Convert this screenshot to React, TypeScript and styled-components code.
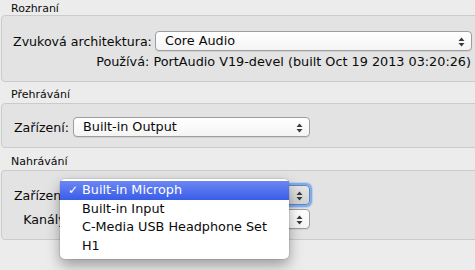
import React from "react";
import styled, { createGlobalStyle } from "styled-components";

const GlobalStyle = createGlobalStyle`
  html, body {
    margin: 0;
    padding: 0;
    background: #ececec;
    overflow: hidden;
  }
  body {
    font-family: "DejaVu Sans", "Liberation Sans", sans-serif;
    color: #0a0a0a;
  }
`;

const Page = styled.div`
  width: 479px;
  height: 270px;
  display: flex;
  flex-direction: column;
`;

const SectionTitle = styled.div<{ $top: number }>`
  font-size: 11px;
  line-height: 13px;
  padding: ${(p) => p.$top}px 0 0 11px;
  height: 13px;
`;

const Group = styled.div<{ $height: number; $top: number; $pad: number }>`
  margin: ${(p) => p.$top}px 0 0 1px;
  height: ${(p) => p.$height}px;
  box-sizing: border-box;
  background: #e3e3e3;
  border: 1px solid #cbcbcb;
  border-radius: 4px;
  padding: ${(p) => p.$pad}px 6px 0 11px;
  display: flex;
  flex-direction: column;
`;

const Row = styled.div<{ $labelWidth: number }>`
  display: grid;
  grid-template-columns: ${(p) => p.$labelWidth}px 1fr;
  column-gap: 4px;
  align-items: center;
  height: 20px;
  & + & {
    margin-top: 4px;
  }
`;

const Label = styled.div`
  font-size: 12.6px;
  text-align: right;
  white-space: nowrap;
`;

const SelectBox = styled.div<{ $width?: number; $focused?: boolean }>`
  position: relative;
  box-sizing: border-box;
  height: 20px;
  width: ${(p) => (p.$width ? `${p.$width}px` : "auto")};
  border: 1px solid ${(p) => (p.$focused ? "#5a86c8" : "#9e9e9e")};
  border-radius: 4px;
  background: ${(p) =>
    p.$focused
      ? "linear-gradient(#e4e4e4, #d2d2d2)"
      : "linear-gradient(#ffffff, #f4f4f4)"};
  box-shadow: ${(p) =>
    p.$focused
      ? "0 0 0 2px rgba(110, 160, 230, 0.75), 0 0 1px 3px rgba(140, 180, 235, 0.45)"
      : "0 1px 0 rgba(0, 0, 0, 0.08)"};
  font-size: 12.8px;
  line-height: 18px;
  padding-left: 9px;
  white-space: nowrap;
`;

const Arrows = styled.svg`
  position: absolute;
  right: 6px;
  top: 5px;
`;

const Info = styled.div`
  font-size: 12.8px;
  text-align: right;
  margin-top: 3px;
  padding-right: 1px;
  white-space: nowrap;
`;

const Menu = styled.div`
  position: absolute;
  left: -14px;
  top: -7px;
  width: 229px;
  background: #ffffff;
  border-radius: 5px;
  padding: 2px 0 4px;
  box-shadow: 0 6px 14px rgba(0, 0, 0, 0.35), 0 0 0 1px rgba(0, 0, 0, 0.08);
  z-index: 5;
`;

const MenuItem = styled.div<{ $active?: boolean }>`
  display: flex;
  align-items: center;
  height: 18.5px;
  font-size: 12.8px;
  color: ${(p) => (p.$active ? "#fff" : "#0a0a0a")};
  background: ${(p) =>
    p.$active ? "linear-gradient(#6b86f3, #3a5de9)" : "transparent"};
  white-space: nowrap;
`;

const Check = styled.span`
  width: 22px;
  padding-left: 8px;
  box-sizing: border-box;
  font-size: 12px;
`;

const StepArrows: React.FC = () => (
  <Arrows width="7" height="10" viewBox="0 0 7 10">
    <path d="M3.5 0.5 L6.5 4 L0.5 4 Z" fill="#3a3a3a" />
    <path d="M3.5 9.5 L6.5 6 L0.5 6 Z" fill="#3a3a3a" />
  </Arrows>
);

const inputDevices = [
  "Built-in Microph",
  "Built-in Input",
  "C-Media USB Headphone Set",
  "H1",
];

const App: React.FC = () => {
  return (
    <Page>
      <GlobalStyle />
      <SectionTitle $top={2}>Rozhraní</SectionTitle>
      <Group $top={0} $height={67} $pad={15}>
        <Row $labelWidth={138}>
          <Label>Zvuková architektura:</Label>
          <SelectBox>
            Core Audio
            <StepArrows />
          </SelectBox>
        </Row>
        <Info>Používá: PortAudio V19-devel (built Oct 19 2013 03:20:26)</Info>
      </Group>

      <SectionTitle $top={6}>Přehrávání</SectionTitle>
      <Group $top={2} $height={45} $pad={13}>
        <Row $labelWidth={56}>
          <Label>Zařízení:</Label>
          <SelectBox $width={237}>
            Built-in Output
            <StepArrows />
          </SelectBox>
        </Row>
      </Group>

      <SectionTitle $top={7}>Nahrávání</SectionTitle>
      <Group $top={2} $height={70} $pad={14}>
        <Row $labelWidth={56}>
          <Label>Zařízení:</Label>
          <SelectBox $width={237} $focused>
            <StepArrows />
            <Menu>
              {inputDevices.map((d, i) => (
                <MenuItem key={d} $active={i === 0}>
                  <Check>{i === 0 ? "✓" : ""}</Check>
                  {d}
                </MenuItem>
              ))}
            </Menu>
          </SelectBox>
        </Row>
        <Row $labelWidth={56}>
          <Label>Kanály:</Label>
          <SelectBox $width={237}>
            <StepArrows />
          </SelectBox>
        </Row>
      </Group>
    </Page>
  );
};

export default App;
